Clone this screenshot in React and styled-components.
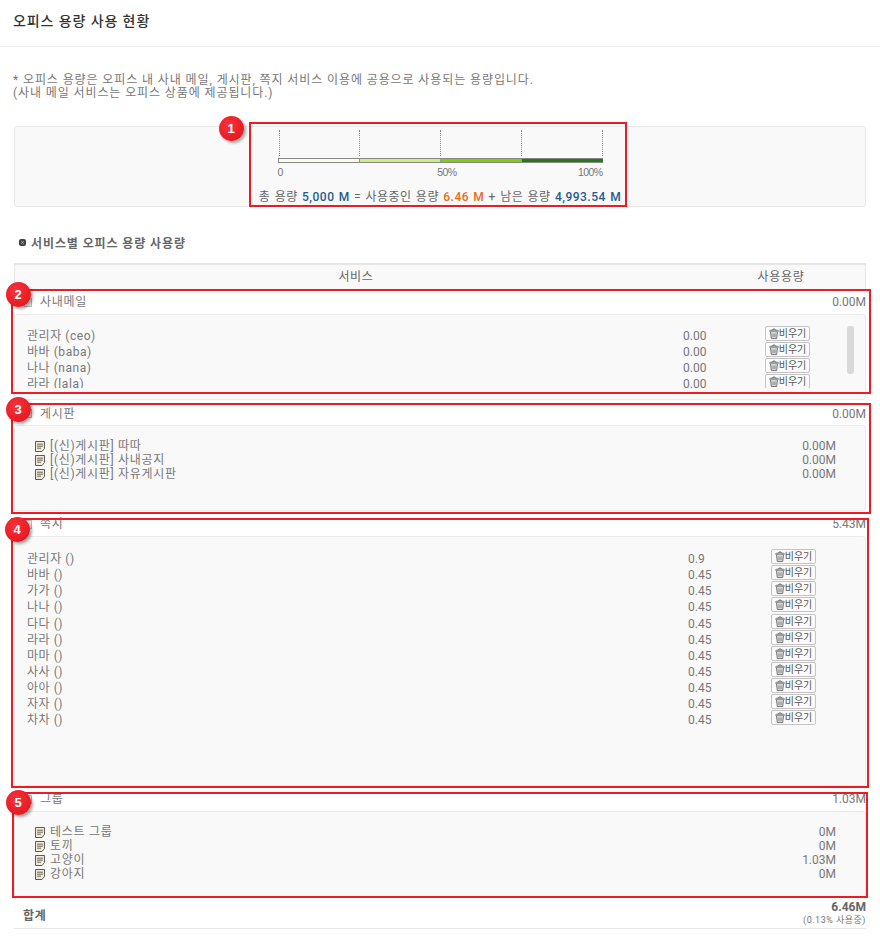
import React from 'react'
import styled, { createGlobalStyle } from 'styled-components'

const GlobalStyle = createGlobalStyle`
  html, body { margin: 0; padding: 0; background: #fff; }
  body {
    font-family: Roboto, "Noto Sans CJK KR", sans-serif;
    font-size: 12px;
    color: #777;
  }
`

const Page = styled.div`
  position: relative;
  width: 880px;
  height: 951px;
  overflow: hidden;
`

const Header = styled.h1`
  margin: 0;
  height: 47px;
  padding: 0 13px;
  box-sizing: border-box;
  border-bottom: 1px solid #eee;
  font-size: 14px;
  font-weight: 500;
  letter-spacing: 0.9px;
  line-height: 42px;
  color: #333;
`

const Notes = styled.p`
  margin: 27px 0 0 13px;
  font-size: 12px;
  letter-spacing: 0.9px;
  line-height: 13px;
  color: #777;
`

const GaugeBox = styled.div`
  margin: 26px 14px 0;
  height: 81px;
  box-sizing: border-box;
  border: 1px solid #e8e8e8;
  border-radius: 3px;
  background: #f9f9f9;
  display: flex;
  flex-direction: column;
  align-items: center;
`

const Ticks = styled.div`
  margin-top: 3px;
  width: 325px;
  height: 26px;
  padding-left: 1px;
  box-sizing: border-box;
  display: flex;
  justify-content: space-between;
`

const Tick = styled.span`
  border-left: 1px dotted #888;
`

const Bar = styled.div`
  margin-top: 2px;
  width: 325px;
  height: 5px;
  box-sizing: border-box;
  display: flex;
  border: 1px solid #888;
  border-right: none;
`

const BarPart = styled.span`
  flex: 1;
  background: ${(p) => p.$color};
  & + & {
    border-left: 1px solid #999;
  }
`

const Scale = styled.div`
  margin-top: 2px;
  width: 325px;
  display: flex;
  justify-content: space-between;
  font-family: "Liberation Sans", sans-serif;
  font-size: 10.5px;
  letter-spacing: -0.6px;
  line-height: 14px;
  color: #777;
`

const ScaleMiddle = styled.span`
  margin-left: 33px;
`

const Summary = styled.div`
  margin-top: 10px;
  font-size: 12px;
  letter-spacing: 0.5px;
  word-spacing: 0.8px;
  line-height: 16px;
  white-space: nowrap;
  color: #666;
`

const Strong = styled.b`
  font-weight: 500;
  color: ${(p) => p.$color};
`

const SectionTitle = styled.h2`
  margin: 27px 0 0 19px;
  display: flex;
  align-items: center;
  gap: 5px;
  height: 16px;
  font-size: 12px;
  font-weight: 700;
  letter-spacing: 0.9px;
  color: #666;
`

const TableHead = styled.div`
  margin: 13px 14px 0;
  height: 26px;
  box-sizing: border-box;
  display: grid;
  grid-template-columns: 682px 1fr;
  border: 1px solid #e6e6e6;
  border-top-width: 2px;
  border-bottom: none;
  background: #f9f9f9;
  letter-spacing: 0.7px;
  line-height: 24px;
  text-align: center;
  color: #666;
`

const Service = styled.section`
  margin: ${(p) => p.$top}px 14px 0;
`

const ServiceHead = styled.div`
  height: ${(p) => p.$height || 24}px;
  display: flex;
  align-items: center;
  padding-left: 10px;
  line-height: 24px;
  color: #777;
`

const ServiceName = styled.span`
  flex: 1;
  margin-left: 8px;
  letter-spacing: 0.7px;
`

const ServiceBox = styled.div`
  position: relative;
  height: ${(p) => p.$height}px;
  box-sizing: border-box;
  border: 1px solid #ebebeb;
  border-radius: 3px;
  background: #f9f9f9;
  padding-top: ${(p) => p.$pad}px;
`

const UserList = styled.div`
  height: ${(p) => p.$height}px;
  padding-top: 2px;
  box-sizing: border-box;
  overflow: hidden;
`

const UserRow = styled.div`
  display: grid;
  grid-template-columns: ${(p) => p.$name}px ${(p) => p.$value}px auto;
  justify-content: start;
  align-items: start;
  height: 16.15px;
  padding-left: 12px;
  line-height: 16px;
`

const UserName = styled.span`
  letter-spacing: 0.55px;
`

const ClearButton = styled.button`
  display: flex;
  align-items: center;
  justify-content: center;
  width: 45px;
  height: 15px;
  margin-top: -2px;
  padding: 0;
  box-sizing: border-box;
  border: 1px solid #c4c4c4;
  border-radius: 2px;
  background: #fbfbfb;
  font: inherit;
  font-size: 10px;
  line-height: 13px;
  color: #555;
`

const FakeScroll = styled.div`
  position: absolute;
  top: 11px;
  left: 832px;
  width: 7px;
  height: 48px;
  border-radius: 3px;
  background: #d9d9d9;
`

const FileRow = styled.div`
  display: flex;
  align-items: center;
  height: 14px;
  padding: 0 29px 0 20px;
  line-height: 14px;
`

const FileName = styled.span`
  flex: 1;
  margin-left: 5px;
  letter-spacing: 0.7px;
`

const Total = styled.div`
  margin: 1px 14px 0;
  height: 31px;
  box-sizing: border-box;
  padding: 0 0 0 9px;
  display: flex;
  justify-content: space-between;
  align-items: center;
  border-bottom: 1px solid #e8e8e8;
`

const TotalLabel = styled.b`
  margin-top: 3px;
  font-weight: 700;
  letter-spacing: 0.6px;
  color: #666;
`

const TotalValue = styled.div`
  text-align: right;
  font-weight: 700;
  font-size: 12px;
  line-height: 14px;
  color: #666;
`

const TotalSub = styled.div`
  font-weight: 400;
  font-size: 9px;
  letter-spacing: 0.5px;
  line-height: 13px;
  color: #777;
`

const Callout = styled.div`
  position: absolute;
  left: ${(p) => p.$x}px;
  top: ${(p) => p.$y}px;
  width: ${(p) => p.$w}px;
  height: ${(p) => p.$h}px;
  box-sizing: border-box;
  border: 2px solid #ed1c24;
  pointer-events: none;
`

const Badge = styled.div`
  position: absolute;
  left: ${(p) => p.$x - 12.5}px;
  top: ${(p) => p.$y - 12.5}px;
  width: 25px;
  height: 25px;
  border-radius: 50%;
  background: radial-gradient(circle at 40% 35%, #f5333a, #e1101a);
  box-shadow: 2px 2px 3px rgba(0, 0, 0, 0.35);
  color: #fff;
  font-family: "Liberation Sans", sans-serif;
  font-size: 13px;
  font-weight: 700;
  line-height: 25px;
  text-align: center;
`

const TrashIcon = () => (
  <svg width="10" height="11" viewBox="0 0 10 11" fill="#d5d5d5" stroke="#6a6a6a" strokeWidth="0.9">
    <path d="M3.5 2.5l.5-1.5h2l.5 1.5" fill="none" />
    <path d="M.5 3a4.5 1 0 0 1 9 0a4.5 1 0 0 1-9 0z" />
    <path d="M1.5 4l.8 6.5h5.4L8.5 4" />
    <path d="M4 5.5v3.5M6 5.5v3.5" strokeWidth="0.7" />
  </svg>
)

const DocIcon = () => (
  <svg width="10" height="11" viewBox="0 0 10 11" fill="#efeadb" stroke="#5f5a4c" strokeWidth="1">
    <path d="M.5 .5h9v7l-2.5 3h-6.5z" />
    <path d="M2 3.2h6M2 5.2h6M2 7.2h4" strokeWidth="0.9" />
  </svg>
)

const BulletIcon = () => (
  <svg width="7" height="7" viewBox="0 0 7 7">
    <rect width="7" height="7" rx="2" fill="#444" />
    <path d="M2.3 2.3l2.4 2.4M4.7 2.3l-2.4 2.4" stroke="#ccc" strokeWidth="0.9" />
  </svg>
)

const ServiceIcon = () => (
  <svg width="8" height="9" viewBox="0 0 8 9" fill="#eee" stroke="#bbb" strokeWidth="1">
    <rect x=".5" y=".5" width="7" height="8" />
  </svg>
)

const mailUsers = [
  ['관리자 (ceo)', '0.00'],
  ['바바 (baba)', '0.00'],
  ['나나 (nana)', '0.00'],
  ['라라 (lala)', '0.00'],
]

const noteUsers = [
  ['관리자 ()', '0.9'],
  ['바바 ()', '0.45'],
  ['가가 ()', '0.45'],
  ['나나 ()', '0.45'],
  ['다다 ()', '0.45'],
  ['라라 ()', '0.45'],
  ['마마 ()', '0.45'],
  ['사사 ()', '0.45'],
  ['아아 ()', '0.45'],
  ['자자 ()', '0.45'],
  ['차차 ()', '0.45'],
]

const boards = [
  ['[(신)게시판] 따따', '0.00M'],
  ['[(신)게시판] 사내공지', '0.00M'],
  ['[(신)게시판] 자유게시판', '0.00M'],
]

const groups = [
  ['테스트 그룹', '0M'],
  ['토끼', '0M'],
  ['고양이', '1.03M'],
  ['강아지', '0M'],
]

const callouts = [
  { n: 1, x: 249, y: 122, w: 378, h: 85, bx: 231, by: 128 },
  { n: 2, x: 11, y: 289, w: 860, h: 105, bx: 18, by: 294.5 },
  { n: 3, x: 11, y: 403, w: 860, h: 111, bx: 18, by: 409 },
  { n: 4, x: 11, y: 518, w: 858, h: 270, bx: 17, by: 529 },
  { n: 5, x: 12, y: 792, w: 856, h: 106, bx: 18, by: 802 },
]

const Users = ({ rows, name, value }) =>
  rows.map(([who, used]) => (
    <UserRow key={who} $name={name} $value={value}>
      <UserName>{who}</UserName>
      <span>{used}</span>
      <ClearButton>
        <TrashIcon />
        비우기
      </ClearButton>
    </UserRow>
  ))

const Files = ({ rows }) =>
  rows.map(([title, used]) => (
    <FileRow key={title}>
      <DocIcon />
      <FileName>{title}</FileName>
      <span>{used}</span>
    </FileRow>
  ))

const App = () => (
  <Page>
    <GlobalStyle />
    <Header>오피스 용량 사용 현황</Header>
    <Notes>
      * 오피스 용량은 오피스 내 사내 메일, 게시판, 쪽지 서비스 이용에 공용으로 사용되는 용량입니다.
      <br />
      (사내 메일 서비스는 오피스 상품에 제공됩니다.)
    </Notes>

    <GaugeBox>
      <Ticks>
        <Tick />
        <Tick />
        <Tick />
        <Tick />
        <Tick />
      </Ticks>
      <Bar>
        <BarPart $color="#fbfde8" />
        <BarPart $color="#cdee7c" />
        <BarPart $color="#7fd000" />
        <BarPart $color="#257a17" />
      </Bar>
      <Scale>
        <span>0</span>
        <ScaleMiddle>50%</ScaleMiddle>
        <span>100%</span>
      </Scale>
      <Summary>
        총 용량 <Strong $color="#1f5c8f">5,000 M</Strong> = 사용중인 용량{' '}
        <Strong $color="#ea6a1c">6.46 M</Strong> + 남은 용량{' '}
        <Strong $color="#1f5c8f">4,993.54 M</Strong>
      </Summary>
    </GaugeBox>

    <SectionTitle>
      <BulletIcon />
      서비스별 오피스 용량 사용량
    </SectionTitle>

    <TableHead>
      <span>서비스</span>
      <span>사용용량</span>
    </TableHead>

    <Service $top={1}>
      <ServiceHead>
        <ServiceIcon />
        <ServiceName>사내메일</ServiceName>
        <span>0.00M</span>
      </ServiceHead>
      <ServiceBox $height={86} $pad={11}>
        <UserList $height={62}>
          <Users rows={mailUsers} name={656} value={82} />
        </UserList>
        <FakeScroll />
      </ServiceBox>
    </Service>

    <Service $top={2}>
      <ServiceHead $height={23}>
        <ServiceIcon />
        <ServiceName>게시판</ServiceName>
        <span>0.00M</span>
      </ServiceHead>
      <ServiceBox $height={86} $pad={13}>
        <Files rows={boards} />
      </ServiceBox>
    </Service>

    <Service $top={1}>
      <ServiceHead>
        <ServiceIcon />
        <ServiceName>쪽지</ServiceName>
        <span>5.43M</span>
      </ServiceHead>
      <ServiceBox $height={250} $pad={14}>
        <Users rows={noteUsers} name={661} value={83} />
      </ServiceBox>
    </Service>

    <Service $top={1}>
      <ServiceHead>
        <ServiceIcon />
        <ServiceName>그룹</ServiceName>
        <span>1.03M</span>
      </ServiceHead>
      <ServiceBox $height={86} $pad={13}>
        <Files rows={groups} />
      </ServiceBox>
    </Service>

    <Total>
      <TotalLabel>합계</TotalLabel>
      <TotalValue>
        6.46M
        <TotalSub>(0.13% 사용중)</TotalSub>
      </TotalValue>
    </Total>

    {callouts.map((c) => (
      <React.Fragment key={c.n}>
        <Callout $x={c.x} $y={c.y} $w={c.w} $h={c.h} />
        <Badge $x={c.bx} $y={c.by}>{c.n}</Badge>
      </React.Fragment>
    ))}
  </Page>
)

export default App
